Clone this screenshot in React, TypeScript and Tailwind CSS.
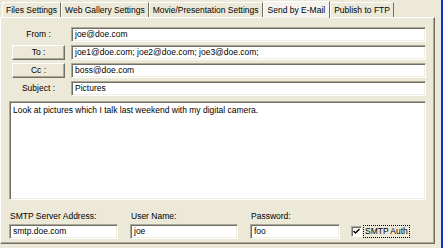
import React from 'react';

const font = { fontFamily: '"Liberation Sans", Arial, sans-serif' };

const tabs = ['Files Settings', 'Web Gallery Settings', 'Movie/Presentation Settings', 'Send by E-Mail', 'Publish to FTP'];

function Field({ value, className }: { value: string; className?: string }) {
  return (
    <div
      className={
        'h-[15px] bg-white border border-t-[#aca899] border-l-[#aca899] border-r-white border-b-white shadow-[inset_1px_1px_0_#716f64,inset_-1px_-1px_0_#f1efe2] pl-[3px] flex items-center text-[8.5px] leading-none text-black whitespace-nowrap overflow-hidden ' +
        (className ?? '')
      }
    >
      {value}
    </div>
  );
}

function Button({ label }: { label: string }) {
  return (
    <div className="w-[53px] h-[15px] flex items-center justify-center bg-[#ece9d8] border border-t-white border-l-white border-r-[#716f64] border-b-[#716f64] shadow-[inset_-1px_-1px_0_#aca899] text-[8.5px] leading-none">
      {label}
    </div>
  );
}

function Row({ label, value, button }: { label: string; value: string; button?: boolean }) {
  return (
    <div className="flex items-center h-[15px] gap-[6px]">
      <div className="w-[53px] flex justify-center ml-[3px]">
        {button ? <Button label={label} /> : <span className="text-[8.5px] leading-none">{label}</span>}
      </div>
      <Field value={value} className="flex-1" />
    </div>
  );
}

export default function App() {
  const active = 3;
  return (
    <div className="w-[443px] h-[248px] bg-[#ece9d8] flex text-black" style={font}>
      <div className="flex-1 flex flex-col">
        {/* tab strip */}
        <div className="h-[17px] flex items-end pl-[2px]">
          {tabs.map((t, i) =>
            i === active ? (
              <div
                key={t}
                className="h-[17px] px-[4px] flex items-center bg-[#f4f3ee] border-t border-l border-t-white border-l-white border-r border-r-[#716f64] text-[8.5px] leading-none relative -mb-px z-10"
              >
                {t}
              </div>
            ) : (
              <div
                key={t}
                className="h-[15px] px-[3px] flex items-center border-t border-l border-t-white border-l-white border-r border-r-[#716f64] text-[8.5px] leading-none"
              >
                {t}
              </div>
            ),
          )}
        </div>
        {/* panel */}
        <div className="w-[435px] h-[227px] border border-t-white border-l-white border-r-[#716f64] border-b-[#716f64] shadow-[inset_-1px_-1px_0_#aca899] flex flex-col px-[8px] pt-[8px]">
          <div className="flex flex-col gap-[3px] mt-px">
            <Row label="From :" value="joe@doe.com" />
            <Row label="To :" value="joe1@doe.com; joe2@doe.com; joe3@doe.com;" button />
            <Row label="Cc :" value="boss@doe.com" button />
            <Row label="Subject :" value="Pictures" />
          </div>
          <div className="mt-[5px] h-[99px] bg-white border border-t-[#aca899] border-l-[#aca899] border-r-white border-b-white shadow-[inset_1px_1px_0_#716f64,inset_-1px_-1px_0_#f1efe2] px-[3px] pt-[3px] text-[8.5px] leading-[10px]">
            Look at pictures which I talk last weekend with my digital camera.
          </div>
          <div className="flex mt-[11px] items-end">
            <div className="w-[109px] flex flex-col gap-[3px]">
              <span className="text-[8.5px] leading-[10px] pl-[1px]">SMTP Server Address:</span>
              <Field value="smtp.doe.com" />
            </div>
            <div className="w-[108px] ml-[12px] flex flex-col gap-[3px]">
              <span className="text-[8.5px] leading-[10px] pl-[1px]">User Name:</span>
              <Field value="joe" />
            </div>
            <div className="w-[90px] ml-[12px] flex flex-col gap-[3px]">
              <span className="text-[8.5px] leading-[10px] pl-[1px]">Password:</span>
              <Field value="foo" />
            </div>
            <div className="ml-[11px] h-[15px] flex items-center gap-[1px]">
              <div className="w-[11px] h-[11px] bg-white border border-t-[#aca899] border-l-[#aca899] border-r-white border-b-white shadow-[inset_1px_1px_0_#716f64] flex items-center justify-center">
                <svg width="7" height="7" viewBox="0 0 7 7">
                  <path d="M0.5 3 L2.5 5 L6.5 1" stroke="#000" strokeWidth="1.5" fill="none" />
                </svg>
              </div>
              <span className="text-[8.5px] leading-none border border-dotted border-black px-px py-px">SMTP Auth</span>
            </div>
          </div>
        </div>
      </div>
      <div className="w-[2px] bg-[#0831d9]" />
    </div>
  );
}
